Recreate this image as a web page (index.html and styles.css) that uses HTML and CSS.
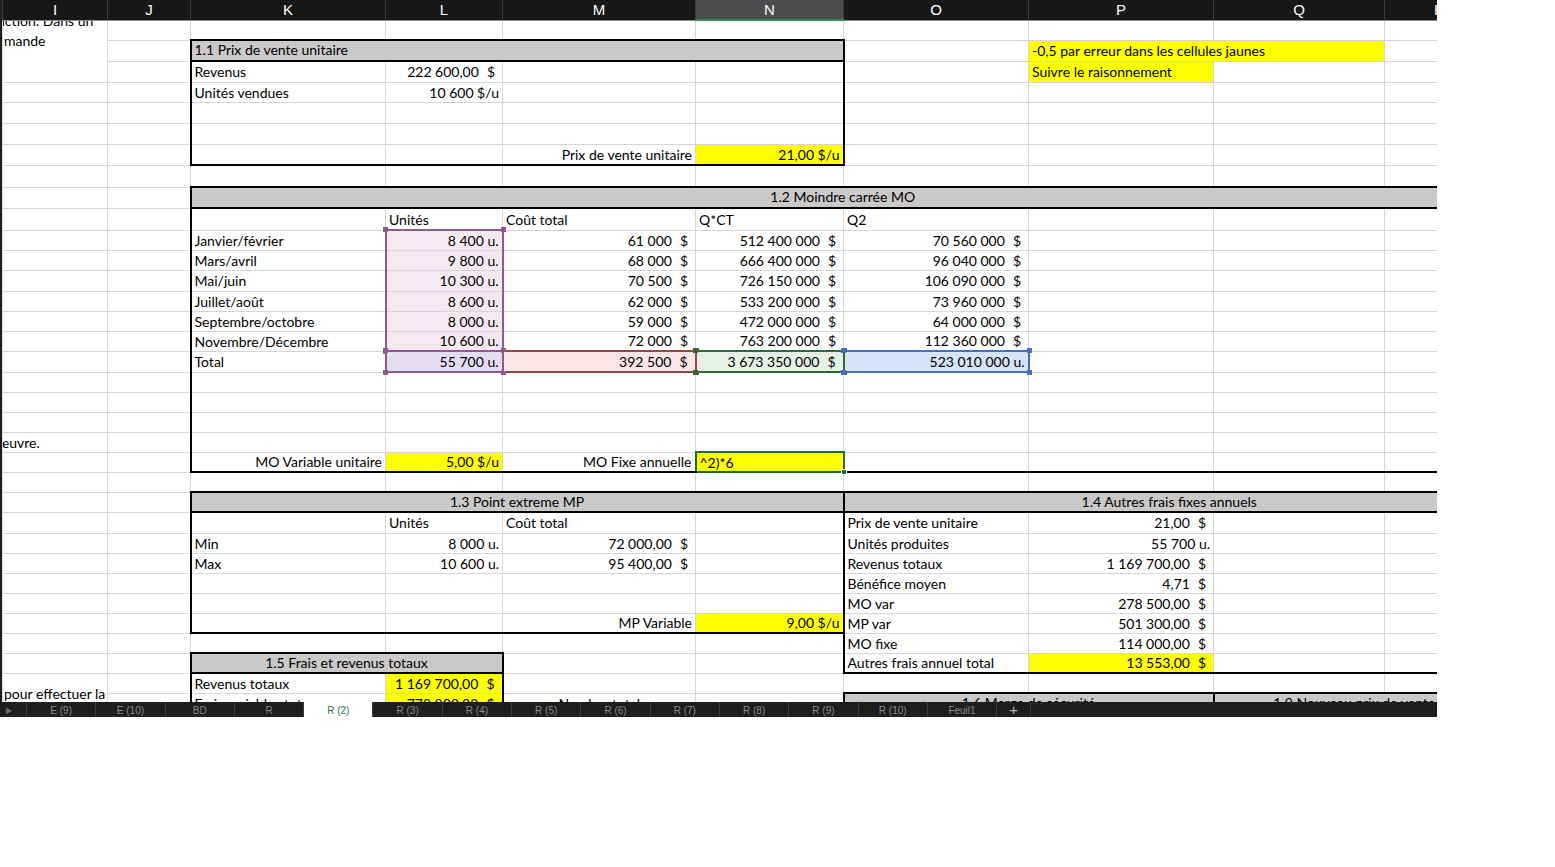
FILE: index.html
```html
<!DOCTYPE html>
<html lang="fr">
<head>
<meta charset="utf-8">
<title>R (2)</title>
<link rel="stylesheet" href="styles.css">
</head>
<body>
<div class="app">
  <div class="sheet">
    <table class="grid">
      <colgroup>
        <col class="c-i"><col class="c-j"><col class="c-k"><col class="c-l"><col class="c-m"><col class="c-n"><col class="c-o"><col class="c-p"><col class="c-q"><col class="c-r">
      </colgroup>
      <thead>
        <tr class="colhead"><th>I</th><th>J</th><th>K</th><th>L</th><th>M</th><th class="active">N</th><th>O</th><th>P</th><th>Q</th><th>R</th></tr>
      </thead>
      <tbody>
        <tr>
          <td rowspan="3" class="note"><div class="clip"><p class="first">nction. Dans un</p><p>mande</p></div></td>
          <td></td><td></td><td></td><td></td><td></td><td></td><td></td><td></td><td></td>
        </tr>
        <tr class="h21">
          <td></td>
          <td colspan="4" class="hd t b l r">1.1 Prix de vente unitaire</td>
          <td></td>
          <td colspan="2" class="yl">-0,5 par erreur dans les cellules jaunes</td>
          <td></td>
        </tr>
        <tr class="h21">
          <td></td>
          <td class="l">Revenus</td>
          <td class="n">222 600,00<span class="c">$</span></td>
          <td></td><td class="r"></td>
          <td></td>
          <td class="yl">Suivre le raisonnement</td>
          <td></td><td></td>
        </tr>
        <tr>
          <td></td><td></td>
          <td class="l">Unités vendues</td>
          <td class="n">10 600 $/u</td>
          <td></td><td class="r"></td>
          <td></td><td></td><td></td><td></td>
        </tr>
        <tr class="h21">
          <td></td><td></td><td class="l"></td><td></td><td></td><td class="r"></td><td></td><td></td><td></td><td></td>
        </tr>
        <tr class="h21">
          <td></td><td></td><td class="l"></td><td></td><td></td><td class="r"></td><td></td><td></td><td></td><td></td>
        </tr>
        <tr class="h21">
          <td></td><td></td>
          <td class="l b"></td><td class="b"></td>
          <td class="b n">Prix de vente unitaire</td>
          <td class="b r n yl">21,00 $/u</td>
          <td></td><td></td><td></td><td></td>
        </tr>
        <tr class="h22">
          <td></td><td></td><td></td><td></td><td></td><td></td><td></td><td></td><td></td><td></td>
        </tr>
        <tr class="h21">
          <td></td><td></td>
          <td colspan="8" class="hd t b l ctr">1.2 Moindre carrée MO</td>
        </tr>
        <tr class="h22">
          <td></td><td></td>
          <td class="l"></td>
          <td>Unités</td><td>Coût total</td><td>Q*CT</td><td>Q2</td>
          <td></td><td></td><td></td>
        </tr>
        <tr>
          <td></td><td></td>
          <td class="l">Janvier/février</td>
          <td class="n rng top rel"><span class="hdl tl pu"></span><span class="hdl tr pu"></span>8 400 u.</td>
          <td class="n">61 000<span class="c">$</span></td>
          <td class="n">512 400 000<span class="c">$</span></td>
          <td class="n">70 560 000<span class="c">$</span></td>
          <td></td><td></td><td></td>
        </tr>
        <tr>
          <td></td><td></td>
          <td class="l">Mars/avril</td>
          <td class="n rng">9 800 u.</td>
          <td class="n">68 000<span class="c">$</span></td>
          <td class="n">666 400 000<span class="c">$</span></td>
          <td class="n">96 040 000<span class="c">$</span></td>
          <td></td><td></td><td></td>
        </tr>
        <tr class="h21">
          <td></td><td></td>
          <td class="l">Mai/juin</td>
          <td class="n rng">10 300 u.</td>
          <td class="n">70 500<span class="c">$</span></td>
          <td class="n">726 150 000<span class="c">$</span></td>
          <td class="n">106 090 000<span class="c">$</span></td>
          <td></td><td></td><td></td>
        </tr>
        <tr>
          <td></td><td></td>
          <td class="l">Juillet/août</td>
          <td class="n rng">8 600 u.</td>
          <td class="n">62 000<span class="c">$</span></td>
          <td class="n">533 200 000<span class="c">$</span></td>
          <td class="n">73 960 000<span class="c">$</span></td>
          <td></td><td></td><td></td>
        </tr>
        <tr>
          <td></td><td></td>
          <td class="l">Septembre/octobre</td>
          <td class="n rng">8 000 u.</td>
          <td class="n">59 000<span class="c">$</span></td>
          <td class="n">472 000 000<span class="c">$</span></td>
          <td class="n">64 000 000<span class="c">$</span></td>
          <td></td><td></td><td></td>
        </tr>
        <tr>
          <td></td><td></td>
          <td class="l">Novembre/Décembre</td>
          <td class="n rng bot rel"><span class="hdl bl pu"></span><span class="hdl br pu"></span>10 600 u.</td>
          <td class="n">72 000<span class="c">$</span></td>
          <td class="n">763 200 000<span class="c">$</span></td>
          <td class="n">112 360 000<span class="c">$</span></td>
          <td></td><td></td><td></td>
        </tr>
        <tr class="h21">
          <td></td><td></td>
          <td class="l">Total</td>
          <td class="n tot-l rel"><span class="hdl tl pu"></span><span class="hdl tr pu"></span><span class="hdl bl pu"></span><span class="hdl br pu"></span>55 700 u.</td>
          <td class="n tot-m rel"><span class="hdl tr rd"></span><span class="hdl br rd"></span>392 500<span class="c">$</span></td>
          <td class="n tot-n rel"><span class="hdl tl gr"></span><span class="hdl bl gr"></span><span class="hdl tr gr"></span><span class="hdl br gr"></span>3 673 350 000<span class="c">$</span></td>
          <td class="n tot-o rel"><span class="hdl tl bu"></span><span class="hdl bl bu"></span><span class="hdl tr bu"></span><span class="hdl br bu"></span>523 010 000 u.</td>
          <td></td><td></td><td></td>
        </tr>
        <tr>
          <td></td><td></td><td class="l"></td><td></td><td></td><td></td><td></td><td></td><td></td><td></td>
        </tr>
        <tr>
          <td></td><td></td><td class="l"></td><td></td><td></td><td></td><td></td><td></td><td></td><td></td>
        </tr>
        <tr>
          <td></td><td></td><td class="l"></td><td></td><td></td><td></td><td></td><td></td><td></td><td></td>
        </tr>
        <tr>
          <td class="note"><div class="clipx">œuvre.</div></td>
          <td></td><td class="l"></td><td></td><td></td><td></td><td></td><td></td><td></td><td></td>
        </tr>
        <tr>
          <td class="rowmark"></td><td></td>
          <td class="l b n">MO Variable unitaire</td>
          <td class="b n yl">5,00 $/u</td>
          <td class="b n">MO Fixe annuelle</td>
          <td class="sel yl rel">^2)*6<span class="hdl br gs"></span></td>
          <td class="b"></td><td class="b"></td><td class="b"></td><td class="b"></td>
        </tr>
        <tr>
          <td></td><td></td><td></td><td></td><td></td><td></td><td></td><td></td><td></td><td></td>
        </tr>
        <tr>
          <td></td><td></td>
          <td colspan="4" class="hd t b l r ctr">1.3 Point extreme MP</td>
          <td colspan="4" class="hd t b l ctr">1.4 Autres frais fixes annuels</td>
        </tr>
        <tr class="h21">
          <td></td><td></td>
          <td class="l"></td><td>Unités</td><td>Coût total</td><td class="r"></td>
          <td class="l">Prix de vente unitaire</td>
          <td class="n">21,00<span class="c">$</span></td>
          <td></td><td></td>
        </tr>
        <tr>
          <td></td><td></td>
          <td class="l">Min</td>
          <td class="n">8 000 u.</td>
          <td class="n">72 000,00<span class="c">$</span></td>
          <td class="r"></td>
          <td class="l">Unités produites</td>
          <td class="n">55 700 u.</td>
          <td></td><td></td>
        </tr>
        <tr>
          <td></td><td></td>
          <td class="l">Max</td>
          <td class="n">10 600 u.</td>
          <td class="n">95 400,00<span class="c">$</span></td>
          <td class="r"></td>
          <td class="l">Revenus totaux</td>
          <td class="n">1 169 700,00<span class="c">$</span></td>
          <td></td><td></td>
        </tr>
        <tr>
          <td></td><td></td>
          <td class="l"></td><td></td><td></td><td class="r"></td>
          <td class="l">Bénéfice moyen</td>
          <td class="n">4,71<span class="c">$</span></td>
          <td></td><td></td>
        </tr>
        <tr>
          <td></td><td></td>
          <td class="l"></td><td></td><td></td><td class="r"></td>
          <td class="l">MO var</td>
          <td class="n">278 500,00<span class="c">$</span></td>
          <td></td><td></td>
        </tr>
        <tr>
          <td></td><td></td>
          <td class="l b"></td><td class="b"></td>
          <td class="b n">MP Variable</td>
          <td class="b r n yl">9,00 $/u</td>
          <td class="l">MP var</td>
          <td class="n">501 300,00<span class="c">$</span></td>
          <td></td><td></td>
        </tr>
        <tr>
          <td></td><td></td><td></td><td></td><td></td><td class="r"></td>
          <td class="l">MO fixe</td>
          <td class="n">114 000,00<span class="c">$</span></td>
          <td></td><td></td>
        </tr>
        <tr>
          <td></td><td></td>
          <td colspan="2" class="hd t b l r ctr">1.5 Frais et revenus totaux</td>
          <td></td><td class="r"></td>
          <td class="l b">Autres frais annuel total</td>
          <td class="b n yl">13 553,00<span class="c">$</span></td>
          <td class="b"></td><td class="b"></td>
        </tr>
        <tr>
          <td rowspan="2" class="note low">pour effectuer la</td>
          <td></td>
          <td class="l">Revenus totaux</td>
          <td class="r n yl">1 169 700,00<span class="c">$</span></td>
          <td></td><td></td><td></td><td></td><td></td><td></td>
        </tr>
        <tr>
          <td></td>
          <td class="l">Frais variables totaux</td>
          <td class="r n yl">779 800,00<span class="c">$</span></td>
          <td class="ctr">Nombre total</td>
          <td></td>
          <td colspan="2" class="hd t l r ctr">1.6 Marge de sécurité</td>
          <td colspan="2" class="hd t l ctr">1.9 Nouveau prix de vente</td>
        </tr>
      </tbody>
    </table>
  </div>
  <div class="tabs">
    <div class="nav">&#9654;</div>
    <div class="tab">E (9)</div>
    <div class="tab">E (10)</div>
    <div class="tab">BD</div>
    <div class="tab">R</div>
    <div class="tab on">R (2)</div>
    <div class="tab">R (3)</div>
    <div class="tab">R (4)</div>
    <div class="tab">R (5)</div>
    <div class="tab">R (6)</div>
    <div class="tab">R (7)</div>
    <div class="tab">R (8)</div>
    <div class="tab">R (9)</div>
    <div class="tab">R (10)</div>
    <div class="tab">Feuil1</div>
    <div class="add">+</div>
  </div>
</div>
</body>
</html>
```

FILE: styles.css
```css
html, body {
  margin: 0;
  padding: 0;
  background: #ffffff;
}

body {
  font-family: Lato, "Liberation Sans", sans-serif;
}

.app {
  width: 1437px;
  height: 717px;
  display: flex;
  flex-direction: column;
  background: #1c1c1c;
}

.sheet {
  height: 702px;
  overflow: hidden;
  border-left: 2px solid #1f1f1f;
  background: #ffffff;
  box-sizing: border-box;
  flex: 0 0 auto;
}

.grid {
  border-collapse: collapse;
  table-layout: fixed;
  width: 1492px;
}

.c-i { width: 105px; }
.c-j { width: 83px; }
.c-k { width: 195px; }
.c-l { width: 117px; }
.c-m { width: 193px; }
.c-n { width: 148px; }
.c-o { width: 185px; }
.c-p { width: 185px; }
.c-q { width: 171px; }
.c-r { width: 110px; }

/* column letters */
.colhead th {
  height: 19px;
  padding: 0;
  background: #171717;
  color: #ffffff;
  font-family: "Liberation Sans", Arial, sans-serif;
  font-size: 15px;
  font-weight: normal;
  line-height: 18px;
  text-align: center;
  border-left: 1px solid #3a3a3a;
  border-right: 1px solid #3a3a3a;
  border-bottom: 1px solid #8a8a8a;
}

.colhead th.active {
  background: #4b4a4c;
  border-bottom: 2px solid #2f8a55;
}

/* cells */
tbody tr { height: 20px; }
tbody tr.h21 { height: 21px; }
tbody tr.h22 { height: 22px; }

td {
  border: 1px solid #d6d6d6;
  padding: 1px 3px 0;
  font-size: 14px;
  color: #000000;
  white-space: nowrap;
  overflow: hidden;
  vertical-align: middle;
  line-height: 16px;
}

.n { text-align: right; }
.ctr { text-align: center; }
.c { padding-left: 8px; padding-right: 4px; }

.t { border-top: 2px solid #000; }
.b { border-bottom: 2px solid #000; }
.l { border-left: 2px solid #000; }
.r { border-right: 2px solid #000; }

.hd { background: #cbc8c8; padding-top: 0; padding-bottom: 1px; }

.yl { background: #ffff00; }

/* wrapped text in column I */
.note {
  padding: 0;
  vertical-align: top;
}
.clip {
  height: 61px;
  overflow: hidden;
}
.clip p {
  margin: 0;
  line-height: 20px;
  padding-left: 1px;
}
.clip p.first {
  margin-top: -10px;
  text-indent: -7px;
}
.clipx {
  overflow: hidden;
  text-indent: -6px;
  line-height: 19px;
}
.note.low {
  vertical-align: top;
  padding: 12px 0 0 1px;
}

/* formula reference ranges */
.rng {
  background: #f6e8f0;
  border-left: 2px solid #8e5a8f;
  border-right: 2px solid #8e5a8f;
}
.rng.top { border-top: 2px solid #8e5a8f; }
.rng.bot { border-bottom: 2px solid #8e5a8f; }

.tot-l { background: #e4ddf0; border: 2px solid #8e5a8f; }
.tot-m { background: #f9e5e5; border: 2px solid #974545; }
.tot-n { background: #e4f1e4; border: 2px solid #2e6a3b; }
.tot-o { background: #d7e3f6; border: 2px solid #4a6ec2; }

.sel { border: 2px solid #1f6b3a; }

.rel {
  position: relative;
  overflow: visible;
}

.hdl {
  position: absolute;
  width: 5px;
  height: 5px;
}
.hdl.tl { left: -4px; top: -4px; }
.hdl.tr { right: -4px; top: -4px; }
.hdl.bl { left: -4px; bottom: -4px; }
.hdl.br { right: -4px; bottom: -4px; }

.pu { background: #8e5a8f; }
.rd { background: #974545; }
.gr { background: #2e6a3b; }
.bu { background: #4a6ec2; }
.gs { background: #1f6b3a; border: 1px solid #ffffff; width: 4px; height: 4px; }

/* sheet tabs */
.tabs {
  height: 15px;
  display: flex;
  background: #1e1e1e;
  font-family: "Liberation Sans", Arial, sans-serif;
  font-size: 10px;
  color: #8a8a8a;
  overflow: hidden;
}

.nav {
  flex: 0 0 27px;
  box-sizing: border-box;
  border-right: 1px solid #3a3a3a;
  font-size: 8px;
  color: #6f6f6f;
  line-height: 17px;
  padding-left: 6px;
}

.tab {
  flex: 0 0 69.3px;
  box-sizing: border-box;
  border-right: 1px solid #3a3a3a;
  text-align: center;
  line-height: 18px;
}

.tab.on {
  background: #ffffff;
  color: #1f7a46;
}

.add {
  flex: 0 0 34px;
  box-sizing: border-box;
  border-right: 1px solid #3a3a3a;
  text-align: center;
  color: #b5b5b5;
  font-size: 15px;
  line-height: 16px;
}
```
